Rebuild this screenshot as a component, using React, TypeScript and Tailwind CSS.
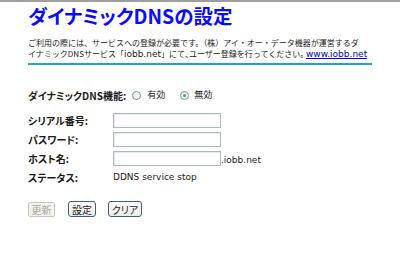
import React from "react";

function Radio({ checked }: { checked?: boolean }) {
  return (
    <span className="inline-flex items-center justify-center w-[9px] h-[9px] rounded-full border border-[#7d8fa6] bg-gradient-to-br from-[#e4e8ee] to-white">
      {checked && <span className="w-[3px] h-[3px] rounded-full bg-[#2fb832]" />}
    </span>
  );
}

function Input() {
  return <div className="w-[108px] h-[15px] border border-[#a9b7c8] bg-white shadow-[inset_1px_1px_0_#e6ebf1]" />;
}

function Label({ children }: { children: React.ReactNode }) {
  return (
    <span className="w-[85px] font-bold text-[10px] font-['Noto_Sans_CJK_JP',sans-serif] [font-feature-settings:'palt']">
      {children}
    </span>
  );
}

const btn =
  "h-[16px] flex items-center justify-center border border-[#3d5f8f] rounded-[3px] bg-gradient-to-b from-white to-[#ecebe6]";

export default function App() {
  return (
    <div className="w-[400px] h-[274px] bg-white border-t-2 border-[#9e9e9e] text-[#1a1a1a] font-['DejaVu_Sans','Noto_Sans_CJK_JP',sans-serif]">
      <div className="px-[28px]">
        <h1 className="text-[19.5px] font-bold text-[#0a0aff] leading-[22px] mt-[3px] font-['Noto_Sans_CJK_JP',sans-serif] [font-feature-settings:'palt']">
          ダイナミックDNSの設定
        </h1>
        <p className="mt-[10px] text-[8px] leading-[11px] whitespace-nowrap font-['Noto_Sans_CJK_JP',sans-serif]">
          ご利用の際には、サービスへの登録が必要です。（株）アイ・オー・データ機器が運営するダ
          <br />
          イナミックDNSサービス「<span className="text-[9px] font-['DejaVu_Sans',sans-serif]">iobb.net</span>」にて
          <span className="[font-feature-settings:'palt']">、</span>ユーザー登録を行ってください
          <span className="[font-feature-settings:'palt']">。</span>{" "}
          <span className="text-[9px] font-['DejaVu_Sans',sans-serif] text-[#0000cc] underline">www.iobb.net</span>
        </p>
        <div className="h-[2px] bg-[#1fa2da] mt-[3px] w-[344px]" />

        <div className="mt-[22px] h-[16px] flex items-center text-[9px] font-['Noto_Sans_CJK_JP',sans-serif] [font-feature-settings:'palt']">
          <span className="font-bold text-[10px]">ダイナミックDNS機能:</span>
          <span className="ml-[6px] flex items-center"><Radio /></span>
          <span className="ml-[6px]">有効</span>
          <span className="ml-[15px] flex items-center"><Radio checked /></span>
          <span className="ml-[5px]">無効</span>
        </div>

        <div className="mt-[10px] flex flex-col gap-[4px] text-[9px]">
          <div className="flex items-center h-[15px]">
            <Label>シリアル番号:</Label>
            <Input />
          </div>
          <div className="flex items-center h-[15px]">
            <Label>パスワード:</Label>
            <Input />
          </div>
          <div className="flex items-center h-[15px]">
            <Label>ホスト名:</Label>
            <Input />
            <span className="self-end leading-[11px]">.iobb.net</span>
          </div>
          <div className="flex items-center h-[15px]">
            <Label>ステータス:</Label>
            <span>DDNS service stop</span>
          </div>
        </div>

        <div className="mt-[16px] flex items-center text-[10px] font-['Noto_Sans_CJK_JP',sans-serif] [font-feature-settings:'palt']">
          <button className="w-[27px] h-[15px] flex items-center justify-center border border-[#c9c6bb] rounded-[2px] bg-[#f4f3ee] text-[#a8a8a0]">更新</button>
          <button className={`ml-[13px] w-[28px] ${btn}`}>設定</button>
          <button className={`ml-[12px] w-[34px] ${btn}`}>クリア</button>
        </div>
      </div>
    </div>
  );
}
